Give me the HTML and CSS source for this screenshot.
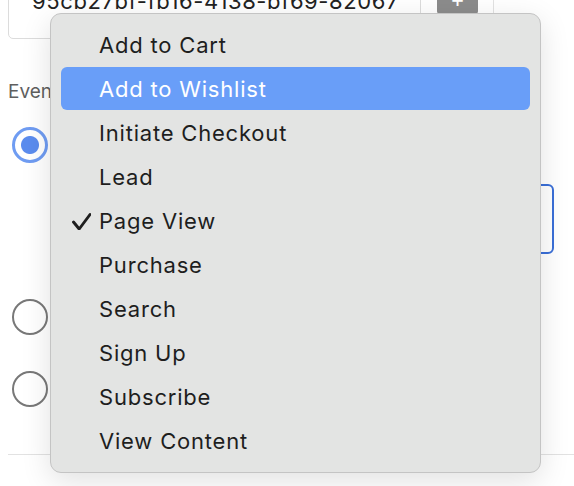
FILE: index.html
```html
<!DOCTYPE html>
<html lang="en">
<head>
  <meta charset="UTF-8">
  <title>Pixel Event Settings</title>
  <link rel="stylesheet" href="styles.css">
</head>
<body>

  <div class="page">
    <div class="id-row">
      <div class="id-input">
        <span class="id-text">95cb27bf-fb16-4138-bf69-820670a1c2d4</span>
      </div>
      <div class="id-addon">
        <button class="add-btn">+</button>
      </div>
    </div>

    <div class="event-label">Event type</div>

    <div class="option">
      <span class="radio checked"></span>
      <span class="option-text">Standard event</span>
    </div>
    <div class="event-field">Page View</div>

    <div class="option">
      <span class="radio"></span>
      <span class="option-text">Custom event</span>
    </div>

    <div class="option">
      <span class="radio"></span>
      <span class="option-text">No event</span>
    </div>

    <div class="divider"></div>
  </div>

  <ul class="menu">
    <li>Add to Cart</li>
    <li class="active">Add to Wishlist</li>
    <li>Initiate Checkout</li>
    <li>Lead</li>
    <li class="selected">
      <svg class="check" width="20" height="18" viewBox="0 0 20 18">
        <path d="M2.5 10 L8.2 17 L19 2.5" fill="none" stroke="#1e1e1e" stroke-width="2.9" stroke-linecap="round" stroke-linejoin="round"/>
      </svg>
      Page View
    </li>
    <li>Purchase</li>
    <li>Search</li>
    <li>Sign Up</li>
    <li>Subscribe</li>
    <li>View Content</li>
  </ul>

</body>
</html>
```

FILE: styles.css
```css
body {
  margin: 0;
  background: #fff;
  font-family: Inter, 'Noto Sans', sans-serif;
  color: #222;
  overflow: hidden;
}

.page {
  padding: 0 20px 0 8px;
}

.id-row {
  display: flex;
  height: 60px;
  margin-top: -21px;
}

.id-input {
  box-sizing: border-box;
  width: 413px;
  border: 1px solid #dcdcdc;
  border-radius: 5px;
  padding: 8px 21px 0 23px;
  font-size: 22px;
  letter-spacing: 0.6px;
}

.id-text {
  display: block;
  white-space: nowrap;
  overflow: hidden;
}

.id-addon {
  box-sizing: border-box;
  width: 73px;
  border-right: 1px solid #e2e2e2;
  padding-left: 16px;
}

.add-btn {
  width: 41px;
  height: 35px;
  border: none;
  border-radius: 3px;
  background: #8c8c8c;
  color: #fff;
  font-family: inherit;
  font-size: 22px;
  padding: 4px 0 0;
  line-height: 20px;
}

.event-label {
  margin-top: 41px;
  font-size: 19px;
  color: #5f5f5f;
  height: 27px;
}

.option {
  display: flex;
  align-items: center;
  gap: 16px;
  height: 36px;
  margin-left: 4px;
}

.event-label + .option {
  margin-top: 20px;
}

.radio {
  width: 36px;
  height: 36px;
  box-sizing: border-box;
  border: 2.5px solid #787878;
  border-radius: 50%;
  flex-shrink: 0;
}

.radio.checked {
  border: 3px solid #6f9cf2;
  background: radial-gradient(circle, #5b8cee 0 8.5px, #fff 9.5px);
}

.option-text {
  font-size: 18px;
}

.event-field {
  margin: 21px 0 45px 60px;
  border: 2.5px solid #3a6fd8;
  border-radius: 6px;
  padding: 20px 16px 0;
  box-sizing: border-box;
  height: 70px;
  font-size: 18px;
}

.option + .option {
  margin-top: 36px;
}

.divider {
  margin: 47px -20px 0 0;
  height: 1px;
  background: #e2e2e2;
}

/* popup list shown over the form */
.menu {
  position: absolute;
  left: 50px;
  top: 13px;
  width: 489px;
  margin: 0;
  padding: 9px 0;
  list-style: none;
  background: #e3e4e3;
  border: 1px solid #c4c4c4;
  border-radius: 11px;
  box-shadow: 0 8px 30px rgba(0, 0, 0, 0.12);
}

.menu li {
  position: relative;
  height: 44px;
  margin: 0 10px;
  padding-left: 38px;
  border-radius: 6px;
  font-size: 22px;
  letter-spacing: 0.8px;
  line-height: 44px;
  color: #1e1e1e;
}

.menu li.active {
  background: #699ef8;
  color: #fff;
  height: 43px;
  margin-bottom: 1px;
}

.menu .check {
  position: absolute;
  left: 10px;
  top: 13px;
}
```
